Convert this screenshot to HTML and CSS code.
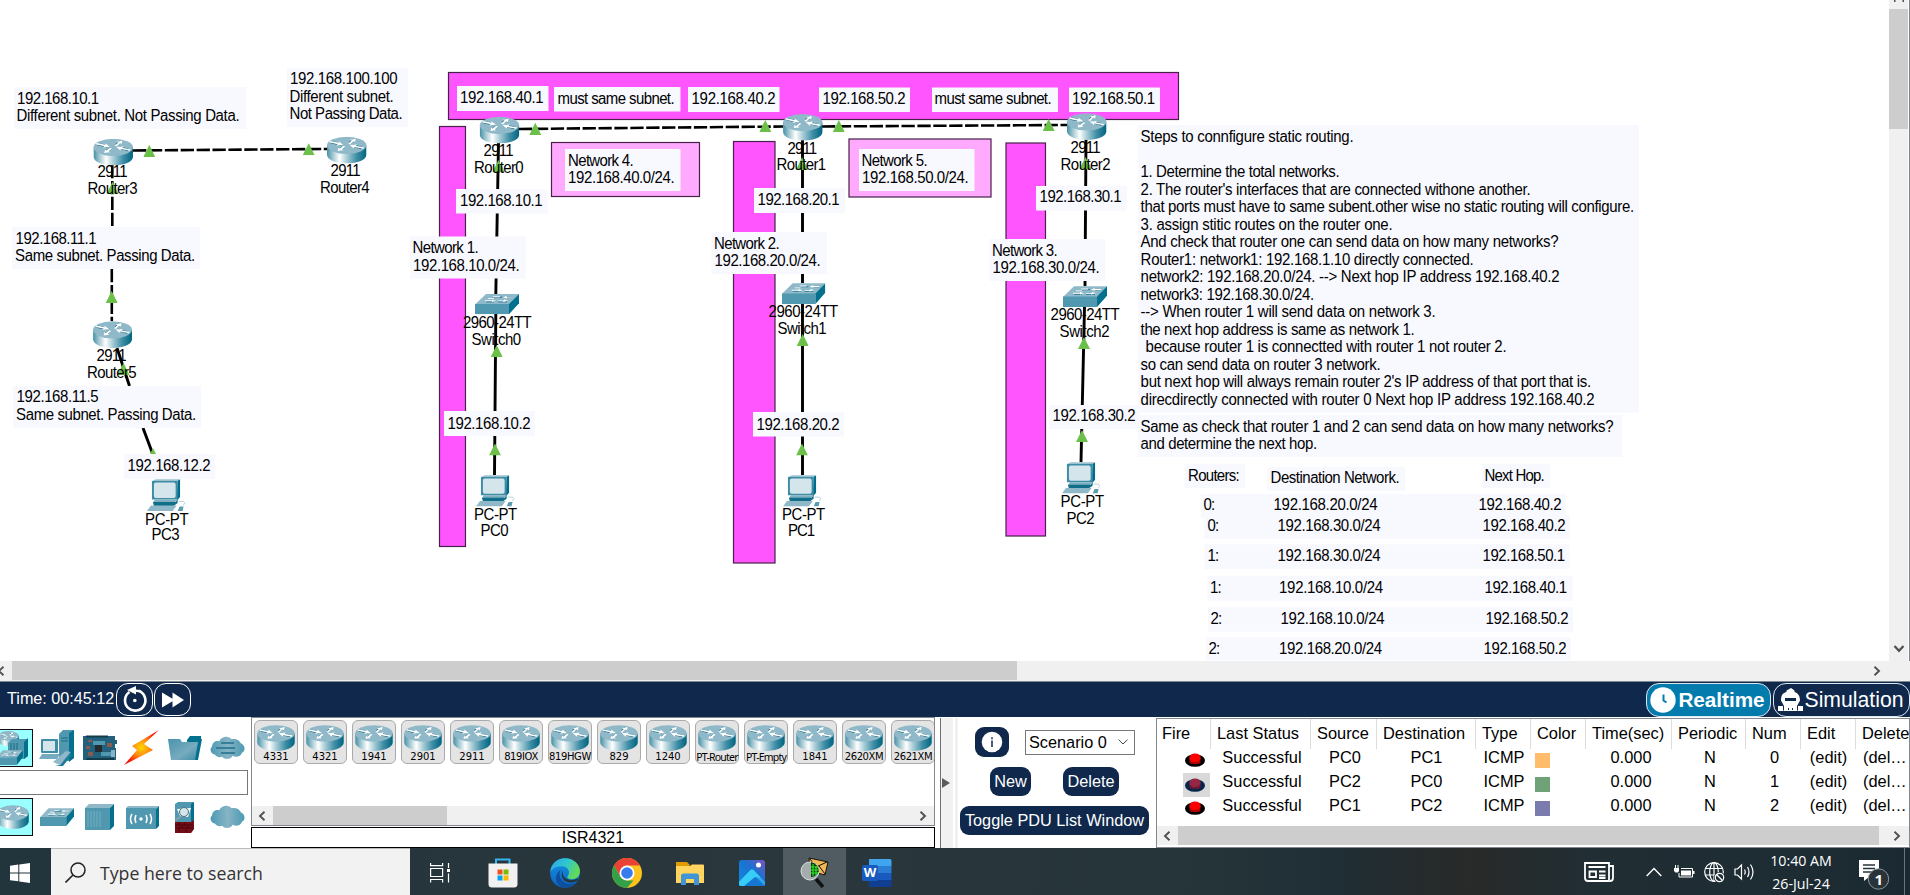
FILE: index.html
```html
<!DOCTYPE html>
<html lang="en">
<head>
<meta charset="utf-8">
<title>Network Simulator</title>
<link rel="stylesheet" href="styles.css">
</head>
<body>
<svg class="defs" width="0" height="0">
  <defs>
    <linearGradient id="metal" x1="0" x2="1" y1="0" y2="0">
      <stop offset="0" stop-color="#4590a6"/><stop offset=".14" stop-color="#9cc4cf"/><stop offset=".32" stop-color="#fff"/>
      <stop offset=".5" stop-color="#a9cdd7"/><stop offset=".75" stop-color="#3f8ea6"/><stop offset="1" stop-color="#006480"/>
    </linearGradient>
    <linearGradient id="cloudFill" x1="0" x2="1" y1="0" y2="0">
      <stop offset="0" stop-color="#4d9ab3"/><stop offset=".5" stop-color="#86b4c5"/><stop offset="1" stop-color="#4d9ab3"/>
    </linearGradient>
    <radialGradient id="boltFill"><stop offset="0" stop-color="#ffd800"/><stop offset=".5" stop-color="#ff8a10"/><stop offset="1" stop-color="#fa1408"/></radialGradient>
    <linearGradient id="edgeA" x1="0" x2="1" y1="0" y2=".4"><stop offset="0" stop-color="#2aa5ea"/><stop offset=".55" stop-color="#30c6d0"/><stop offset="1" stop-color="#62d958"/></linearGradient>
    <linearGradient id="edgeB" x1="0" x2="0" y1="0" y2="1"><stop offset="0" stop-color="#1793e0"/><stop offset="1" stop-color="#0b63c4"/></linearGradient>
    <linearGradient id="photoBg" x1="0" x2="1" y1="1" y2="0"><stop offset="0" stop-color="#0d8ce0"/><stop offset=".6" stop-color="#1d70d0"/><stop offset="1" stop-color="#7b54bd"/></linearGradient>
    <linearGradient id="folderFill" x1="0" x2="1" y1="0" y2="1"><stop offset="0" stop-color="#4893ac"/><stop offset=".6" stop-color="#77abbf"/><stop offset="1" stop-color="#3f8ca6"/></linearGradient>
    <symbol id="router" viewBox="0 0 40 27" preserveAspectRatio="none">
      <path d="M.3 8.6v9.6c0 4.9 8.800 8.700 19.700 8.700s19.700-3.800 19.700-8.700V8.600z" fill="url(#metal)"/>
      <ellipse cx="20" cy="8.800" rx="19.700" ry="8.600" fill="#8fb8c8"/>
      <g fill="none" stroke="#1d6c85" stroke-width="2.400"><path d="M4 5.500l10 2.300M23 6.500l4-3.300M35 11.500l-9-2.400M17 10l-4 3.200"/></g>
      <g fill="#fff"><path d="M3 4.300l9 2V4.800l4.500 3.500-7 .8 1.600-1.300-8-1.700z"/><path d="M21.500 7.300l3.500-3.200-1.800-.8 5.800-1.100-.6 3.200-1.500-.6-3.500 3.200z"/><path d="M36.500 12.300l-9-1.700-.3 1.500-4.200-3.500 7.500-.7-1.500 1.300 8.500 1.700z"/><path d="M18.500 10l-3.200 3 1.500.7-5.800.7.700-3.100 1.500.7 3.300-2.800z"/></g>
    </symbol>
    <symbol id="switch" viewBox="0 0 44 21" preserveAspectRatio="none">
      <path d="M0 11L11 .3h33L34 11z" fill="#8fb8c8"/><path d="M0 10.500h34V21H0z" fill="#4f98b0"/><path d="M34 10.500L44 .3v9.500L34 21z" fill="#03708d"/>
      <g fill="none" stroke="#3f879f" stroke-width="1.400"><path d="M18 3.600h9M30 3.600h8M11 8.200h8M23 8.200h9"/></g>
      <g fill="#fff"><path d="M18 2.600h7v1h-7zM31 2.300l-3 1.500 4 1v-.8h6v-1h-6zM17 6.100l4 1.200-4 1.300v-.8h-7v-1h7zM29 6l4 1.300-5 1.200v-.8h-5v-.8h6zM13 4.400h6v.8h-6z"/></g>
    </symbol>
    <symbol id="pc" viewBox="0 0 40 32" preserveAspectRatio="none">
      <path d="M5 2l4-1.800h24L31 3z" fill="#9cc1ce"/><path d="M31 2l2.500-1.800V18L30 22z" fill="#006e8b"/><path d="M5 2h26v18.500H5z" fill="#3f8ca6"/>
      <rect x="7" y="3.500" width="22" height="15.500" rx="2" fill="#d4e6ec"/><path d="M8 20.500h23l-3 3H6z" fill="#7fafc1"/><path d="M6 23h23l2-2.500v3.500l-4 3H7z" fill="#126f89"/>
      <path d="M4 26.500h26L26 32H0z" fill="#8fb8c8"/><path d="M33 27.500h4L36 32h-5z" fill="#5b9cb2"/><path d="M32 22.500c6-.5 8 1 4.500 4" fill="none" stroke="#a4c8d5" stroke-width=".8"/>
    </symbol>
    <symbol id="up" viewBox="0 0 12 12" preserveAspectRatio="none"><path d="M6 0l6 12H0z" fill="#6cc04a"/></symbol>
    <symbol id="cloud" viewBox="0 0 34 23"><path d="M5 18C0 17-.5 12 2 10 2 6 6 4 9 5c2-5 9-6 12-2 4-1 8 1 9 4 4 2 5 7 1 9-1 4-6 5-9 3-2 4-8 4-10 1-3 1-6 0-7-2z" fill="url(#cloudFill)"/></symbol>
    <symbol id="fire" viewBox="0 0 20 14"><ellipse cx="10" cy="7.500" rx="10" ry="6.300" fill="#000"/><path d="M4.500 5v4.500c1 2 10 2 11 0V5z" fill="#b00000"/><ellipse cx="10" cy="4.800" rx="5.700" ry="4.300" fill="#f00"/></symbol>
    <symbol id="fireSel" viewBox="0 0 20 14"><ellipse cx="10" cy="7.500" rx="10" ry="6.300" fill="#06254a"/><path d="M4.500 5v4.500c1 2 10 2 11 0V5z" fill="#6b1634"/><ellipse cx="10" cy="4.800" rx="5.700" ry="4.300" fill="#952745"/></symbol>
    <symbol id="left" viewBox="0 0 8 10"><path d="M6.500 .8L2 5l4.500 4.200" fill="none" stroke="#505050" stroke-width="1.900"/></symbol>
    <symbol id="right" viewBox="0 0 8 10"><path d="M1.500 .8L6 5 1.500 9.200" fill="none" stroke="#505050" stroke-width="1.900"/></symbol>
  </defs>
</svg>

<div class="app">
  <main class="workspace">
    <svg class="canvas" width="1889" height="661" viewBox="0 0 1889 661">
      <g class="zone">
        <rect x="448.500" y="72.500" width="730" height="47"/>
        <rect x="439.500" y="126.500" width="26" height="420"/>
        <rect x="733.500" y="141.500" width="41.500" height="421.500"/>
        <rect x="1006" y="143" width="39.500" height="393"/>
      </g>
      <g class="zone zone-light">
        <rect x="551.500" y="142.500" width="148" height="54"/>
        <rect x="849" y="139" width="142" height="58"/>
      </g>
      <g class="link">
        <path class="dash" d="M133 150.500L327 149M519 129L783 126.500M822 126.500L1067 125"/>
        <path class="dash" d="M112.300 165V227M111.800 269V321"/>
        <path d="M117 348L129.500 386M143 428L153.500 456M498.500 143L495.800 295M495.800 314L494.500 475M802.500 140V283M802.500 304V475M1086 139L1085 286M1084.500 307L1081 462"/>
      </g>
      <g>
        <use href="#up" x="143.300" y="144.700" width="12" height="12.300"/><use href="#up" x="302.700" y="143.300" width="12" height="12"/>
        <use href="#up" x="106.500" y="181.700" width="12" height="12.300"/><use href="#up" x="105.700" y="291" width="12" height="12"/>
        <use href="#up" x="117.500" y="363" width="12" height="12"/><use href="#up" x="147" y="448" width="12" height="12"/>
        <use href="#up" x="529.300" y="122.700" width="12" height="12.300"/><use href="#up" x="759.300" y="120" width="12" height="12"/>
        <use href="#up" x="832.800" y="120" width="12" height="12"/><use href="#up" x="1042.700" y="119" width="12" height="12"/>
        <use href="#up" x="492.500" y="160" width="12" height="12"/><use href="#up" x="796" y="157" width="12" height="13"/><use href="#up" x="1079.500" y="157" width="12" height="12"/>
        <use href="#up" x="490.700" y="345" width="12" height="12"/><use href="#up" x="796.700" y="334" width="12" height="12"/><use href="#up" x="1078" y="337" width="12" height="12"/>
        <use href="#up" x="489" y="443.500" width="12" height="12"/><use href="#up" x="796" y="443.500" width="12" height="12"/><use href="#up" x="1076" y="430" width="12" height="12"/>
      </g>
      <g class="note">
        <rect x="14" y="87" width="232" height="42"/><rect x="287" y="68" width="121" height="59"/><rect x="12" y="227" width="188" height="42"/>
        <rect x="13" y="386" width="188" height="42"/><rect x="124" y="454" width="91" height="25"/>
        <rect x="457" y="86" width="91.500" height="25"/><rect x="554" y="87" width="126.500" height="24.500"/><rect x="688" y="87" width="91.500" height="25"/>
        <rect x="819" y="87.500" width="91" height="24.500"/><rect x="932" y="87.500" width="126" height="24.500"/><rect x="1069" y="87.500" width="91" height="24.500"/>
        <rect x="565" y="149" width="115.500" height="42"/><rect x="859" y="149" width="115.500" height="42"/>
        <rect x="456" y="189" width="91.500" height="24.500"/><rect x="410" y="236.500" width="115.500" height="42"/><rect x="444" y="411" width="91" height="25"/>
        <rect x="754" y="188" width="91" height="25"/><rect x="711.500" y="232" width="115.500" height="42"/><rect x="753" y="412" width="91" height="24.500"/>
        <rect x="1036" y="186" width="91" height="24.500"/><rect x="989.500" y="239" width="115.500" height="42"/><rect x="1049" y="405" width="90" height="24"/>
        <rect x="1138" y="125" width="501" height="287.500"/><rect x="1138" y="415" width="484" height="42"/>
        <rect x="1184.500" y="464" width="60.500" height="24"/><rect x="1267.500" y="467" width="137.500" height="24"/><rect x="1482" y="464" width="68" height="24"/>
        <rect x="1201" y="494" width="365" height="24"/><rect x="1204.500" y="515" width="365" height="24"/><rect x="1204.500" y="544.500" width="365" height="24.500"/>
        <rect x="1207.500" y="576" width="365" height="24.500"/><rect x="1208" y="607" width="365" height="24.500"/><rect x="1206" y="637.500" width="365" height="22.500"/>
      </g>
      <g>
        <use href="#router" x="93.300" y="138.500" width="40" height="27"/><use href="#router" x="326.700" y="136.500" width="40" height="27"/><use href="#router" x="92.800" y="321" width="39.500" height="27"/>
        <use href="#router" x="479.500" y="116.500" width="40" height="27"/><use href="#router" x="782.800" y="113.700" width="40" height="27"/><use href="#router" x="1066.700" y="113" width="40" height="27"/>
        <use href="#switch" x="475" y="293.700" width="44" height="20.500"/><use href="#switch" x="781.800" y="283" width="43.500" height="21"/><use href="#switch" x="1063" y="286" width="44" height="21"/>
        <use href="#pc" x="147" y="479" width="39.500" height="32"/><use href="#pc" x="476" y="475" width="39.500" height="31.500"/><use href="#pc" x="783" y="475" width="39.500" height="31.500"/><use href="#pc" x="1062" y="462" width="39.500" height="31.500"/>
      </g>
      <g class="label" transform="translate(-.4 -.5)">
        <text x="17.500" y="104" textLength="82">192.168.10.1</text><text x="17" y="121.300" textLength="223">Different subnet. Not Passing Data.</text>
        <text x="290.500" y="84.500" textLength="107.500">192.168.100.100</text><text x="290" y="102" textLength="104">Different subnet.</text><text x="290" y="119" textLength="113">Not Passing Data.</text>
        <text x="98" y="177.700" textLength="30">2911</text><text x="88" y="194.700" textLength="50">Router3</text>
        <text x="331" y="176.500" textLength="30">2911</text><text x="320.500" y="193" textLength="49.500">Router4</text>
        <text x="16" y="244" textLength="81">192.168.11.1</text><text x="15.500" y="261" textLength="180">Same subnet. Passing Data.</text>
        <text x="97" y="361" textLength="30">2911</text><text x="87.500" y="378" textLength="49.500">Router5</text>
        <text x="17" y="403" textLength="82">192.168.11.5</text><text x="16.500" y="420.300" textLength="180">Same subnet. Passing Data.</text>
        <text x="128" y="471.500" textLength="83">192.168.12.2</text><text x="145.500" y="525" textLength="43.500">PC-PT</text><text x="152" y="540.700" textLength="28">PC3</text>

        <text x="460.500" y="103.300" textLength="83.500">192.168.40.1</text><text x="558" y="104" textLength="117">must same subnet.</text><text x="692" y="104" textLength="84">192.168.40.2</text>
        <text x="823" y="104" textLength="83">192.168.50.2</text><text x="935" y="104" textLength="117">must same subnet.</text><text x="1072.500" y="104" textLength="83">192.168.50.1</text>
        <text x="484" y="156" textLength="30">2911</text><text x="474.500" y="173" textLength="49.500">Router0</text>
        <text x="788" y="154" textLength="29.500">2911</text><text x="777" y="170" textLength="49.500">Router1</text>
        <text x="1071" y="153" textLength="30">2911</text><text x="1061" y="170" textLength="50">Router2</text>
        <text x="568.500" y="166" textLength="65.500">Network 4.</text><text x="568.500" y="183" textLength="106.500">192.168.40.0/24.</text>
        <text x="862" y="166" textLength="66">Network 5.</text><text x="862.500" y="183" textLength="106.500">192.168.50.0/24.</text>
        <text x="460.500" y="206" textLength="82.500">192.168.10.1</text><text x="758" y="205" textLength="82">192.168.20.1</text><text x="1040" y="202" textLength="82">192.168.30.1</text>
        <text x="413" y="253" textLength="66">Network 1.</text><text x="413.500" y="271" textLength="106.500">192.168.10.0/24.</text>
        <text x="714.500" y="249" textLength="65.500">Network 2.</text><text x="715" y="266" textLength="106">192.168.20.0/24.</text>
        <text x="992.500" y="256" textLength="65.500">Network 3.</text><text x="993" y="273" textLength="107">192.168.30.0/24.</text>
        <text x="463.500" y="328" textLength="68.500">2960-24TT</text><text x="472" y="345" textLength="49.500">Switch0</text>
        <text x="769" y="317" textLength="69.500">2960-24TT</text><text x="778" y="334" textLength="49">Switch1</text>
        <text x="1051" y="320" textLength="69">2960-24TT</text><text x="1060" y="337" textLength="50">Switch2</text>
        <text x="448" y="429" textLength="83">192.168.10.2</text><text x="757" y="430" textLength="83">192.168.20.2</text><text x="1053" y="421.500" textLength="83">192.168.30.2</text>
        <text x="474.500" y="520" textLength="43">PC-PT</text><text x="481" y="536.500" textLength="28">PC0</text>
        <text x="782.500" y="520" textLength="43">PC-PT</text><text x="788.500" y="536.500" textLength="27">PC1</text>
        <text x="1061" y="507" textLength="43.500">PC-PT</text><text x="1067" y="524" textLength="28">PC2</text>

        <text x="1141" y="142" textLength="213">Steps to connfigure static routing.</text>
        <text x="1141" y="177" textLength="199">1. Determine the total networks.</text>
        <text x="1141" y="195" textLength="390">2. The router's interfaces that are connected withone another.</text>
        <text x="1141" y="212.300" textLength="493.500">that ports must have to same subent.other wise no static routing will configure.</text>
        <text x="1141" y="230" textLength="252">3. assign stitic routes on the router one.</text>
        <text x="1141" y="247.500" textLength="418">And check that router one can send data on how many networks?</text>
        <text x="1141" y="265" textLength="333">Router1: network1: 192.168.1.10 directly connected.</text>
        <text x="1141" y="282.300" textLength="419">network2: 192.168.20.0/24. --&gt; Next hop IP address 192.168.40.2</text>
        <text x="1141" y="300" textLength="173.500">network3: 192.168.30.0/24.</text>
        <text x="1141" y="317.500" textLength="295">--&gt; When router 1 will send data on network 3.</text>
        <text x="1141" y="335" textLength="274">the next hop address is same as network 1.</text>
        <text x="1146" y="352.500" textLength="361">because router 1 is connectted with router 1 not router 2.</text>
        <text x="1141" y="370" textLength="240">so can send data on router 3 network.</text>
        <text x="1141" y="387.500" textLength="450.500">but next hop will always remain router 2's IP address of that port that is.</text>
        <text x="1141" y="405" textLength="454">direcdirectly connected with router 0 Next hop IP address 192.168.40.2</text>
        <text x="1141" y="432" textLength="473">Same as check that router 1 and 2 can send data on how many networks?</text>
        <text x="1141" y="449" textLength="176.500">and determine the next hop.</text>

        <text x="1188.500" y="481" textLength="51.500">Routers:</text><text x="1271" y="483" textLength="129">Destination Network.</text><text x="1485" y="481" textLength="60">Next Hop.</text>
        <text x="1204" y="510" textLength="11.500">0:</text><text x="1274" y="510" textLength="104">192.168.20.0/24</text><text x="1479" y="510" textLength="83">192.168.40.2</text>
        <text x="1208" y="531" textLength="11.500">0:</text><text x="1278" y="531" textLength="103">192.168.30.0/24</text><text x="1483" y="531" textLength="83">192.168.40.2</text>
        <text x="1208" y="561" textLength="11.500">1:</text><text x="1278" y="561" textLength="103">192.168.30.0/24</text><text x="1483" y="561" textLength="82.500">192.168.50.1</text>
        <text x="1210.500" y="593" textLength="11.500">1:</text><text x="1279.500" y="593" textLength="104">192.168.10.0/24</text><text x="1485" y="593" textLength="82.500">192.168.40.1</text>
        <text x="1211" y="624" textLength="11.500">2:</text><text x="1281" y="624" textLength="104">192.168.10.0/24</text><text x="1486" y="624" textLength="83">192.168.50.2</text>
        <text x="1209" y="654" textLength="11.500">2:</text><text x="1279.500" y="654" textLength="103">192.168.20.0/24</text><text x="1484" y="654" textLength="83">192.168.50.2</text>
      </g>
    </svg>
    <div class="vscroll"><svg class="up-arrow" width="10" height="3"><path d="M.5 2V0M9.500 2V0" stroke="#505050" stroke-width="2"/></svg><i class="vthumb"></i><svg class="down-arrow" width="12" height="8" viewBox="0 0 12 8"><path d="M1.500 1L6 5.800 10.500 1" fill="none" stroke="#505050" stroke-width="2.200"/></svg></div>
  </main>
  <div class="hscroll main-scroll"><svg width="8" height="10"><use href="#left"/></svg><i class="thumb"></i><svg width="8" height="10"><use href="#right"/></svg></div>

  <section class="timebar">
    <span class="time">Time: 00:45:12</span>
    <button class="pill"><svg width="26" height="28" viewBox="0 0 26 28"><path d="M7.500 6A10.200 10.200 0 1 0 16.500 4.800" fill="none" stroke="#fff" stroke-width="2.600"/><path d="M5 4l9-4v3.500c3 0 5 1 6.500 3L14 6v2.500z" fill="#fff"/><circle cx="12.800" cy="14.500" r="1.800" fill="#fff"/></svg></button>
    <button class="pill"><svg width="22" height="16" viewBox="0 0 22 16"><path d="M0 .5l10.500 6.300V.5L22 8 10.500 15.500V9.200L0 15.500z" fill="#fff"/></svg></button>
    <button class="mode realtime"><svg width="26" height="26" viewBox="0 0 26 26"><circle cx="13" cy="13" r="12.700" fill="#fff"/><path d="M13.500 7.500v6l3 2" fill="none" stroke="#037bad" stroke-width="2"/></svg><span>Realtime</span></button>
    <button class="mode simulation"><svg width="25" height="24" viewBox="0 0 25 24"><path d="M3 12.500C3 6 6 4.500 8.500 4V2.500L13 0l3.500 2.500V4C20 5 22 8 22 12.500L19 18h6v5H0v-5h6z" fill="#fff"/><path d="M7 11.500h11" stroke="#0f284c" stroke-width="3"/><path d="M5.500 18v4.500M10.500 20v2M14.500 20v2M19.500 18v4.500" stroke="#0f284c"/></svg><span>Simulation</span></button>
  </section>

  <section class="bottom">
    <div class="categories">
      <div class="cat-row">
        <span class="cat on"><svg width="34" height="36" viewBox="0 0 34 36"><use href="#router" x="2" y="1" width="21" height="15"/><path d="M12 13l4-4h16v17l-4 3H12z" fill="#4f98b0"/><path d="M28 12l4-4v18l-4 3z" fill="#03708d"/><path d="M15 13v9M18 13v9M21 13v9" stroke="#1d6c85"/><use href="#switch" x="0" y="20" width="27" height="15"/></svg></span>
        <span class="cat"><svg width="36" height="36" viewBox="0 0 36 36"><path d="M20 4l4-4h11v28l-5 3H20z" fill="#4f98b0"/><path d="M30 3l5-3v28l-5 4z" fill="#03708d"/><path d="M22 8h7M22 11h7" stroke="#1d6c85"/><rect x="2" y="9" width="17" height="14" rx="1" fill="#3f8ca6"/><rect x="4" y="11" width="12" height="10" fill="#d4e6ec"/><path d="M3 24h18l-3 5H0z" fill="#76aabe"/><path d="M14 32L27 21l5 1-11 13z" fill="#8fb8c8"/><path d="M21 35l11-13v4l-8 10h-8z" fill="#1d7c97"/></svg></span>
        <span class="cat"><svg width="34" height="26" viewBox="0 0 34 26"><path d="M0 1h32v4h2v4h-2v4h1v12H0z" fill="#22607c"/><path d="M3 1.500h22M3 24h28" stroke="#123c4a" stroke-width="2"/><path d="M10 6h12v4H10zM18 17h10v4H18z" fill="#4f98b0"/><rect x="12" y="10" width="7" height="7" fill="#222b30"/><path d="M5 5h4v2H5zM5 17h5v4H5zM24 8h5v4h-5zM3 11h4v3H3z" fill="#8a5a4c"/><path d="M28 15h4v7h-4z" fill="#86b4c5"/></svg></span>
        <span class="cat"><svg width="36" height="36" viewBox="0 0 36 36"><path d="M35 0L20 14l9 6L0 35l13-15-5-4z" fill="url(#boltFill)"/></svg></span>
        <span class="cat"><svg width="34" height="26" viewBox="0 0 34 26"><path d="M19 5l3-4h11v3h1l-4 21H20z" fill="#03708d"/><path d="M0 4h12l2 3h16l-3 18H3z" fill="url(#folderFill)"/></svg></span>
        <span class="cat"><svg width="35" height="24"><use href="#cloud" width="35" height="24"/><path d="M11 7h13M6 12h19M11 17h14" stroke="#397e97" stroke-width="2"/></svg></span>
      </div>
      <div class="filter"></div>
      <div class="cat-row">
        <span class="cat on"><svg width="32" height="24"><use href="#router" width="32" height="24"/></svg></span>
        <span class="cat"><svg width="34" height="18"><use href="#switch" width="34" height="18"/></svg></span>
        <span class="cat"><svg width="29" height="26" viewBox="0 0 29 26"><path d="M0 4l4-4h25l-4 4z" fill="#8fb8c8"/><path d="M0 4h25v22H0z" fill="#4f98b0"/><path d="M25 4l4-4v22l-4 4z" fill="#03708d"/><path d="M3 7v16M6 7v16M9 7v16M12 7v16M15 7v16" stroke="#8ab8c7" stroke-width=".7"/></svg></span>
        <span class="cat"><svg width="33" height="23" viewBox="0 0 33 23"><path d="M0 2l2-2h31l-3 3z" fill="#8fb8c8"/><path d="M0 2h30v21H0z" fill="#4f98b0"/><path d="M30 3l3-3v20l-3 3z" fill="#03708d"/><g fill="none" stroke="#fff" stroke-width="1.500"><path d="M6 8q-3 5 0 10M10 9q-2 4 0 8M20 9q2 4 0 8M24 8q3 5 0 10"/></g><circle cx="15" cy="13" r="1.700" fill="#fff"/></svg></span>
        <span class="cat"><svg width="20" height="31" viewBox="0 0 20 31"><path d="M0 2l3-2h16v27l-3 4H0z" fill="#4f98b0"/><path d="M16 2l3-2v20l-3 1z" fill="#03708d"/><path d="M0 20h16l3-2v9l-3 4H0z" fill="#740d16"/><path d="M0 23h18M0 26h18M4 20v3M10 20v3M7 23v3M13 23v3M4 26v4M11 26v4" stroke="#3c0408" stroke-width=".7"/><path d="M2 7l14-1-3 9-8-1z" fill="#fff"/><circle cx="9" cy="10" r="4.500" fill="#d4e6ec" stroke="#47727e"/><path d="M6 14l-5 4" stroke="#8f9fa5" stroke-width="2"/></svg></span>
        <span class="cat"><svg width="35" height="24"><use href="#cloud" width="35" height="24"/></svg></span>
      </div>
    </div>

    <div class="devices">
      <div class="device-list">
        <div class="tiles">
          <div class="tile"><svg width="38" height="26"><use href="#router" width="38" height="26"/></svg><span>4331</span></div>
          <div class="tile"><svg width="38" height="26"><use href="#router" width="38" height="26"/></svg><span>4321</span></div>
          <div class="tile"><svg width="38" height="26"><use href="#router" width="38" height="26"/></svg><span>1941</span></div>
          <div class="tile"><svg width="38" height="26"><use href="#router" width="38" height="26"/></svg><span>2901</span></div>
          <div class="tile"><svg width="38" height="26"><use href="#router" width="38" height="26"/></svg><span>2911</span></div>
          <div class="tile"><svg width="38" height="26"><use href="#router" width="38" height="26"/></svg><span class="snug">819IOX</span></div>
          <div class="tile"><svg width="38" height="26"><use href="#router" width="38" height="26"/></svg><span class="snug">819HGW</span></div>
          <div class="tile"><svg width="38" height="26"><use href="#router" width="38" height="26"/></svg><span>829</span></div>
          <div class="tile"><svg width="38" height="26"><use href="#router" width="38" height="26"/></svg><span>1240</span></div>
          <div class="tile"><svg width="38" height="26"><use href="#router" width="38" height="26"/></svg><span class="tight">PT-Router</span></div>
          <div class="tile"><svg width="38" height="26"><use href="#router" width="38" height="26"/></svg><span class="tight">PT-Empty</span></div>
          <div class="tile"><svg width="38" height="26"><use href="#router" width="38" height="26"/></svg><span>1841</span></div>
          <div class="tile"><svg width="38" height="26"><use href="#router" width="38" height="26"/></svg><span class="snug">2620XM</span></div>
          <div class="tile"><svg width="38" height="26"><use href="#router" width="38" height="26"/></svg><span class="snug">2621XM</span></div>
        </div>
        <div class="hscroll device-scroll"><svg width="8" height="10"><use href="#left"/></svg><i class="thumb"></i><svg width="8" height="10"><use href="#right"/></svg></div>
      </div>
      <div class="device-name">ISR4321</div>
    </div>

    <div class="splitter"><svg width="8" height="10"><path d="M0 0l8 5-8 5z" fill="#5c5c5c"/></svg></div>

    <div class="scenario">
      <div class="line"><button class="info"><svg width="22" height="22"><circle cx="11" cy="11" r="10.300" fill="#fff"/><path d="M11 9.500v6.500M11 6.200v2" stroke="#4a5c7a" stroke-width="2"/></svg></button><div class="select"><span>Scenario 0</span><svg width="10" height="6"><path d="M.5 .7L5 5l4.500-4.300" fill="none" stroke="#444"/></svg></div></div>
      <div class="line actions"><button>New</button><button>Delete</button></div>
      <button class="toggle">Toggle PDU List Window</button>
    </div>

    <div class="pdu">
      <div class="row head"><span>Fire</span><span>Last Status</span><span>Source</span><span>Destination</span><span>Type</span><span>Color</span><span>Time(sec)</span><span>Periodic</span><span>Num</span><span>Edit</span><span>Delete</span></div>
      <div class="row"><span class="f"><svg width="20" height="14"><use href="#fire"/></svg></span><span>Successful</span><span>PC0</span><span>PC1</span><span>ICMP</span><span class="c"><i class="swatch orange"></i></span><span>0.000</span><span>N</span><span>0</span><span>(edit)</span><span>(del…</span></div>
      <div class="row"><span class="f"><b><svg width="20" height="14"><use href="#fireSel"/></svg></b></span><span>Successful</span><span>PC2</span><span>PC0</span><span>ICMP</span><span class="c"><i class="swatch green"></i></span><span>0.000</span><span>N</span><span>1</span><span>(edit)</span><span>(del…</span></div>
      <div class="row"><span class="f"><svg width="20" height="14"><use href="#fire"/></svg></span><span>Successful</span><span>PC1</span><span>PC2</span><span>ICMP</span><span class="c"><i class="swatch purple"></i></span><span>0.000</span><span>N</span><span>2</span><span>(edit)</span><span>(del…</span></div>
      <div class="hscroll pdu-scroll"><svg width="8" height="10"><use href="#left"/></svg><i class="thumb"></i><svg width="8" height="10"><use href="#right"/></svg></div>
    </div>
  </section>

  <footer class="taskbar">
    <div class="start"><svg width="20" height="20" viewBox="0 0 20 20"><path d="M0 2.800L8.300 1.600v7.800H0zM9.300 1.400L20 0v9.400H9.300zM0 10.400h8.300v7.900L0 17.200zM9.300 10.400H20V20L9.300 18.500z" fill="#fff"/></svg></div>
    <div class="search"><svg width="21" height="21" viewBox="0 0 21 21"><circle cx="13" cy="8" r="7" fill="none" stroke="#222" stroke-width="1.500"/><path d="M8 13l-7.500 7.500" stroke="#222" stroke-width="1.600"/></svg><span>Type here to search</span></div>
    <div class="tasks">
      <span><svg width="20" height="20" viewBox="0 0 20 20" fill="none" stroke="#fff" stroke-width="1.200"><path d="M.6 0v2.600h12V0M.6 19.500v-3h12v3M.6 5.500h12v8H.6zM18.500 0v5M18.500 10.500v9"/><path d="M17 7.500h3" stroke-width="3"/></svg></span>
      <span><svg width="30" height="30" viewBox="0 0 30 30"><path d="M8 7V1.500h13.500V7" fill="none" stroke="#35b4f0" stroke-width="2"/><path d="M.5 5.500h29V26q0 3.500-3.500 3.500H4Q.5 29.500.5 26z" fill="#f1f1f1"/><path d="M9.500 11.500h5v5h-5z" fill="#f25022"/><path d="M15.500 11.500h5v5h-5z" fill="#7fba00"/><path d="M9.500 17.500h5v5h-5z" fill="#00a4ef"/><path d="M15.500 17.500h5v5h-5z" fill="#ffb900"/></svg></span>
      <span><svg width="30" height="30" viewBox="0 0 30 30"><circle cx="15" cy="15" r="14.800" fill="url(#edgeB)"/><path d="M.3 14C1 5 8 .2 15 .2c9 0 15 6.500 15 13 0 5-4 8-8 8-3 0-6-1-4-3.500 3-5-1-9.500-6-9.500C6 8.200 1.500 11 .3 14z" fill="url(#edgeA)"/><path d="M11 12c-4 6 1 14 9 14 3 0 5-1 7-2-4 5.500-12 7.500-18 3.500C4 23 6 14 11 12z" fill="#0d4f9d"/><path d="M13 12c-2 6 3 10 8 10 3 0 5-.5 7.500-2l-1 2.800C18 28 8 21 13 12z" fill="#26343b"/></svg></span>
      <span><svg width="30" height="30" viewBox="0 0 30 30"><circle cx="15" cy="15" r="15" fill="#fcc31e"/><path d="M2 7.500A15 15 0 0 1 28 7.500H15L8.500 18.700z" fill="#ea4335"/><path d="M2 7.500l6.500 11.200L15 22.500h6.500L15 30A15 15 0 0 1 2 7.500z" fill="#34a047"/><circle cx="15" cy="15" r="7.500" fill="#fff"/><circle cx="15" cy="15" r="5.800" fill="#397ded"/></svg></span>
      <span><svg width="28" height="24" viewBox="0 0 28 24"><path d="M0 1h11l2.500 2.500V9H0z" fill="#df9c00"/><path d="M0 5h14l2-1.500h11q1 0 1 1V22H0z" fill="#ffd45f"/><path d="M5 24v-9q0-2.500 2.500-2.500h13Q23 12.500 23 15v9h-5v-6h-8v6z" fill="#3f95d6"/></svg></span>
      <span><svg width="26" height="26" viewBox="0 0 26 26"><rect width="26" height="26" rx="2.500" fill="url(#photoBg)"/><path d="M0 22L11 10.500q2-2 4 0L26 22v2q0 2-2 2H2q-2 0-2-2z" fill="#2ba7ef"/><path d="M5 26L14 17q1.500-1.300 3 0l9 9z" fill="#1577d3"/><path d="M0 22L11 10.500q2-2 4 0L22 18 16 17 5 26H2q-2 0-2-2z" fill="#37cdf8"/><circle cx="19.500" cy="5" r="2.500" fill="#fff"/></svg></span>
      <span class="active"><svg width="30" height="31" viewBox="0 0 30 31"><path d="M9 1l19 4-3 13-15-4z" fill="#f2b853" stroke="#111"/><path d="M10 2l6 8L27 5M16 10l-3 5M19 9l6 8" fill="none" stroke="#111"/><circle cx="10" cy="14" r="9" fill="#a5adac" stroke="#d9dfde"/><path d="M11 5q7 2 8 9-3 6-8 6z" fill="#063b06"/><path d="M13 7v12M16 9v9M11 10h7M11 13h8M11 16h7" stroke="#2bef2b" stroke-width="1.200"/><path d="M16 22l7 8" stroke="#111" stroke-width="3.500"/></svg></span>
      <span><svg width="30" height="28" viewBox="0 0 30 28"><path d="M7 0h21q1.500 0 1.500 1.500V7H7z" fill="#41a5ee"/><path d="M7 7h22.500v7H7z" fill="#2b7cd3"/><path d="M7 14h22.500v7H7z" fill="#185abd"/><path d="M7 21h22.500v5.500q0 1.500-1.500 1.500H7z" fill="#103f91"/><rect y="6" width="16" height="16" rx="1.500" fill="#185abd"/><text x="1.800" y="18.300" class="word">W</text></svg></span>
    </div>
    <div class="tray">
      <svg class="news" width="30" height="20" viewBox="0 0 30 20" fill="none" stroke="#fff" stroke-width="1.800"><path d="M1 1h24v18H4q-3 0-3-3zM25 4h4v12q0 3-3 3M4.500 5h17M15 9.500h6.500M15 13.500h6.500M15 16h6.500M5.500 9.500h6.500v5.500H5.500z"/></svg>
      <svg class="chev" width="16" height="10" viewBox="0 0 16 10"><path d="M.7 9L8 1.500 15.300 9" fill="none" stroke="#fff" stroke-width="1.400"/></svg>
      <svg class="batt" width="21" height="14" viewBox="0 0 21 14"><path d="M7 3.500h11.500v8.500H5V8" fill="none" stroke="#fff"/><path d="M7 5.500h10v5H7z" fill="#fff"/><path d="M19 6h1.500v3H19zM0 3h5v3L4 7.500H1.500L0 6zM1 0h1v3H1zM3.500 0h1v3h-1z" fill="#fff"/></svg>
      <svg class="globe" width="21" height="21" viewBox="0 0 21 21" fill="none" stroke="#fff" stroke-width="1.200"><circle cx="10" cy="10" r="9.300"/><ellipse cx="10" cy="10" rx="4.300" ry="9.300"/><path d="M1.500 6.500h17M1 13h12M10 .7v18.500"/><circle cx="15.500" cy="15.500" r="5.500" fill="#1e2d35" stroke="none"/><circle cx="15.500" cy="15.500" r="4.200"/><path d="M12.500 12.500l6 6"/></svg>
      <svg class="vol" width="21" height="18" viewBox="0 0 21 18" fill="none" stroke="#fff" stroke-width="1.200"><path d="M1 6v6h2.500l4 4V2l-4 4zM10.500 6.500q1.500 2.500 0 5M13.500 4q3 5 0 10M16.500 1.500q5 7.500 0 15"/></svg>
      <div class="clock"><span>10:40 AM</span><span>26-Jul-24</span></div>
      <svg class="notice" width="31" height="32" viewBox="0 0 31 32"><path d="M0 1h20v17H10l-5 4v-4H0z" fill="#fff"/><path d="M4 6h12M4 9.500h12M4 13h12" stroke="#26353d" stroke-width="1.300"/><circle cx="19.500" cy="20" r="10.200" fill="#28343a" stroke="#8d9598"/><text x="15.500" y="25.500" class="count">1</text></svg>
      <i class="peek"></i>
    </div>
  </footer>
</div>
</body>
</html>
```
FILE: styles.css
```css
* { box-sizing: border-box; }
body { margin: 0; width: 1910px; height: 895px; overflow: hidden; background: #fff; font-family: "Liberation Sans", Arial, sans-serif; color: #000; }
button { font: inherit; color: #fff; padding: 0; border: 0; background: #0f284c; display: flex; align-items: center; justify-content: center; white-space: nowrap; }
svg { flex: none; display: block; }
.defs { position: absolute; }
.app { display: flex; flex-direction: column; height: 895px; }

.workspace { height: 661px; display: flex; border-right: 1px solid #82828c; }
.canvas { background: #fff; }
.zone rect { fill: #ff55ff; stroke: #472147; stroke-width: 1.200; }
.zone-light rect { fill: #ffaaff; }
.link path { fill: none; stroke: #000; stroke-width: 2.900; }
.link .dash { stroke-width: 2.600; stroke-dasharray: 13.300 2.600; }
.note rect { fill: #f8f8ff; }
/* Labels are slightly taller than their natural shape; scaled about the baseline. */
.label text { font-size: 15px; fill: #000; transform-box: fill-box; transform-origin: 0 81%; transform: scaleY(1.07); }
.vscroll { width: 20px; background: #f0f0f0; display: flex; flex-direction: column; align-items: center; border-right: 1px solid #fff; }
.up-arrow { height: 9px; }
.vthumb { width: 19px; height: 120px; background: #cdcdcd; }
.down-arrow { margin-top: auto; margin-bottom: 8px; }

.hscroll { display: flex; align-items: center; background: #f0f0f0; }
.hscroll .thumb { align-self: stretch; background: #cdcdcd; }
.hscroll svg:last-child { margin-left: auto; }
.main-scroll { height: 21px; border-bottom: 1px solid #808890; padding-right: 29px; }
.main-scroll svg:first-child { margin-left: -3px; }
.main-scroll .thumb { width: 1005px; margin: 0 0 1px 7px; }

.timebar { height: 35px; background: #0f284c; color: #fff; display: flex; align-items: center; padding-left: 7px; }
.time { width: 109px; font-size: 16.200px; line-height: 18px; padding-bottom: 4px; white-space: nowrap; }
.pill { width: 37px; height: 33px; border: 1px solid #fff; border-radius: 12px; margin-right: 1px; }
.mode { height: 34px; border: 1px solid #dce8f0; border-radius: 13px; gap: 2px; }
.realtime { margin-left: auto; width: 125px; background: #037bad; font-weight: bold; font-size: 20.700px; padding-right: 2px; }
.simulation { margin-left: 2px; width: 137px; font-size: 21.200px; padding-right: 2px; }

.bottom { height: 131px; display: flex; }
.categories { width: 251px; overflow: hidden; padding-top: 12px; }
.cat-row { display: grid; grid-template-columns: repeat(6, 42.700px); height: 38px; margin-left: -7px; }
.cat { display: flex; align-items: center; justify-content: center; }
.cat.on { background: #9ff; border: 1px solid #111; width: 40px; }
.filter { height: 25px; width: 250px; margin: 3px 0 3px -2px; border: 1px solid #777; }

.devices { width: 684px; display: flex; flex-direction: column; }
.device-list { height: 109px; border: 1px solid #828790; overflow: hidden; display: flex; flex-direction: column; }
.tiles { display: flex; gap: 5px; padding: 2px 0 0 2px; height: 88px; }
.tile { flex: none; width: 44px; height: 44px; border: 1px solid #aaa; border-radius: 6px; background: #e4e4e4; display: flex; flex-direction: column; align-items: center; padding-top: 4px; }
.tile span { font: 10px/11px "DejaVu Sans", sans-serif; white-space: nowrap; }
.tile .snug { letter-spacing: -.4px; }
.tile .tight { font: 10.500px/12px "Noto Sans", sans-serif; letter-spacing: -.8px; }
.device-scroll { height: 19px; padding: 0 7px 0 6px; }
.device-scroll .thumb { width: 174px; margin-left: 7px; }
.device-name { margin-top: 1px; height: 21px; border: 1px solid #000; font-size: 16px; line-height: 19px; text-align: center; }

.splitter { width: 18px; height: 130px; margin: 1px 0 0 5px; border-left: 1px solid #6f6f6f; border-right: 3px solid #f0f0f0; display: flex; align-items: center; padding-left: 1px; background: linear-gradient(90deg, #f1f1f1 12px, #fff 12px); }

.scenario { width: 198px; padding: 10px 0 0 2px; font-size: 16.300px; }
.scenario button { border-radius: 9px; height: 29px; }
.line { display: flex; align-items: center; }
.scenario .info { width: 34px; height: 30px; margin-left: 15px; }
.select { margin: 0 0 0 16px; width: 110px; height: 25px; border: 1px solid #777; display: flex; align-items: center; justify-content: space-between; padding: 0 6px 0 3px; }
.actions { margin: 10px 0 10px 30px; gap: 32px; }
.actions button:first-child { width: 41px; }
.actions button:last-child { width: 56px; }
.scenario .toggle { width: 189px; }

.pdu { width: 754px; height: 130px; margin-top: 1px; border: 1px solid #828790; font-size: 16.400px; overflow: hidden; }
.row { display: grid; grid-template-columns: 54px 100px 66px 99px 55px 55px 86px 74px 55px 55px 53px; height: 24px; line-height: 16px; text-align: center; white-space: nowrap; }
.row.head { height: 30px; line-height: 28px; text-align: left; }
.head span { padding-left: 5px; border-right: 1px solid #ddd; }
.head span:last-child { border: 0; }
.row > span:nth-child(n+2) { padding-left: 6px; }
.row:not(.head) > span:nth-child(2) { padding-left: 2px; }
.row:not(.head) > span:nth-child(3) { padding-left: 2px; }
.row:not(.head) > span:nth-child(4) { padding-left: 0; }
.row:not(.head) > span:nth-child(5) { padding-left: 1px; }
.row:not(.head) > span:nth-child(7) { padding-left: 4px; }
.row:not(.head) > span:nth-child(8) { padding-left: 2px; }
.row:not(.head) > span:nth-child(9) { padding-left: 2px; }
.row:not(.head) > span:nth-child(10) { padding-left: 0; }
.row:not(.head) > span:nth-child(11) { text-align: left; padding-left: 7px; }
.row .f { display: flex; justify-content: flex-end; padding-right: 6px; }
.f > svg { margin-top: 4px; }
.f b { width: 27px; height: 24px; background: #d9d9d9; margin-right: -5px; padding: 5px 0 0 2px; }
.row > .c:nth-child(6) { padding: 4px 0 0 4px; }
.swatch { display: block; width: 15px; height: 15px; }
.orange { background: #ffbd6b; }
.green { background: #6fa377; }
.purple { background: #7b7bad; }
.pdu-scroll { height: 19px; margin-top: 5px; padding: 0 8px 0 6px; }
.pdu-scroll .thumb { width: 701px; margin-left: 7px; }

.taskbar { height: 47px; color: #fff; display: flex; background: linear-gradient(90deg, #22343c, #2a373c 40%, #26353a 62%, #202e35 70%, #292a29 77%, #212e34 83%, #1b2a32); font-family: "Open Sans", "Noto Sans", sans-serif; }
.start { width: 51px; display: flex; align-items: center; padding: 2px 0 0 10px; }
.search { width: 359px; background: #f2f2f2; border-top: 1px solid #bbb; color: #333; display: flex; align-items: center; gap: 14px; padding: 1px 0 0 14px; font-size: 17.700px; }
.tasks { display: flex; margin-left: -1px; }
.tasks span { width: 62.400px; display: flex; align-items: center; justify-content: center; padding-top: 2px; }
.tasks .active { background: #505c61; }
.word { font: bold 13px "Open Sans", sans-serif; fill: #fff; }
.tray { margin-left: auto; display: flex; align-items: center; padding-top: 1px; }
.chev { margin-left: 32px; }
.batt { margin-left: 12px; }
.globe { margin-left: 9px; }
.vol { margin-left: 9px; }
.clock { margin-left: 14px; width: 64px; font-size: 14.200px; line-height: 23px; display: flex; flex-direction: column; align-items: center; white-space: nowrap; }
.notice { margin: 6px 14px 0 26px; }
.count { font: bold 15px "Open Sans", sans-serif; fill: #fff; }
.peek { width: 6px; height: 47px; border-left: 1px solid #6b7478; margin-top: -1px; }
```
